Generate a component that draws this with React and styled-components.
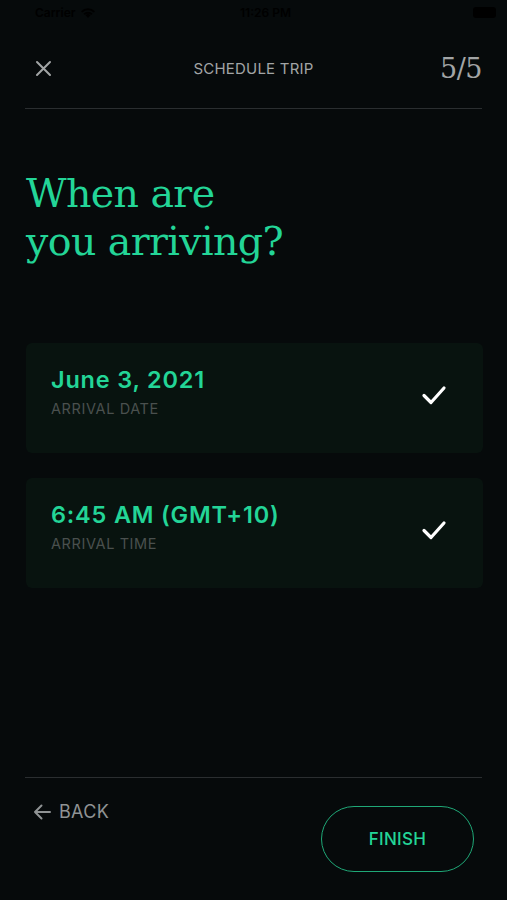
import React from "react";
import styled, { createGlobalStyle } from "styled-components";

const Global = createGlobalStyle`
  html, body { margin: 0; padding: 0; background: #060a0b; }
  * { box-sizing: border-box; }
`;

const Screen = styled.div`
  width: 507px;
  height: 900px;
  background: #060a0b;
  display: flex;
  flex-direction: column;
  font-family: Inter, "Noto Sans", sans-serif;
  overflow: hidden;
`;

const StatusBar = styled.div`
  height: 25px;
  display: grid;
  grid-template-columns: 1fr auto 1fr;
  align-items: center;
  padding: 0 11px 0 35px;
  color: #000;
  font-size: 12px;
  font-weight: 600;
`;

const Carrier = styled.div`
  display: flex;
  align-items: center;
  gap: 4px;
`;

const Battery = styled.div`
  justify-self: end;
  width: 23px;
  height: 11px;
  border-radius: 3px;
  background: #000;
`;

const Header = styled.div`
  margin: 0 25px;
  padding: 23px 0 20px;
  display: grid;
  grid-template-columns: 1fr auto 1fr;
  align-items: center;
  border-bottom: 1px solid #2a2e30;
  height: 84px;
`;

const Close = styled.div`
  display: flex;
  align-items: center;
  padding-left: 10px;
`;

const HeaderTitle = styled.div`
  color: #a2a5a6;
  font-size: 15px;
  letter-spacing: 0.2px;
`;

const Step = styled.div`
  justify-self: end;
  color: #a2a5a6;
  font-family: "DejaVu Serif", serif;
  font-size: 27px;
  letter-spacing: -0.5px;
`;

const Title = styled.h1`
  margin: 60px 26px 0;
  color: #23d597;
  font-family: "DejaVu Serif", serif;
  font-weight: 400;
  font-size: 39.5px;
  line-height: 48px;
  letter-spacing: -0.6px;
`;

const Cards = styled.div`
  margin: 78px 24px 0 26px;
  display: flex;
  flex-direction: column;
  gap: 25px;
`;

const Card = styled.div`
  height: 110px;
  border-radius: 6px;
  background: #08130f;
  display: flex;
  align-items: center;
  justify-content: space-between;
  padding: 0 36px 0 25px;
`;

const CardText = styled.div`
  display: flex;
  flex-direction: column;
  gap: 6px;
  margin-top: -14px;
`;

const Value = styled.div`
  color: #23d597;
  font-size: 23.5px;
  font-weight: 600;
  letter-spacing: 0.8px;
`;

const Label = styled.div`
  color: #4a504e;
  font-size: 14.5px;
  letter-spacing: 0.6px;
`;

const CheckWrap = styled.div`
  display: flex;
  margin-top: -6px;
`;

const Spacer = styled.div`
  flex: 1;
`;

const Footer = styled.div`
  margin: 0 25px;
  border-top: 1px solid #2a2e30;
  height: 123px;
  display: flex;
  justify-content: space-between;
  align-items: flex-start;
`;

const Back = styled.div`
  display: flex;
  align-items: center;
  gap: 7px;
  margin-top: 23px;
  margin-left: 7px;
  color: #8f9394;
  font-size: 18px;
  letter-spacing: 0.3px;
`;

const Finish = styled.div`
  margin-top: 28px;
  margin-right: 8px;
  width: 153px;
  height: 66px;
  border-radius: 33px;
  border: 1.5px solid #1fa877;
  display: flex;
  align-items: center;
  justify-content: center;
  color: #23d597;
  font-size: 17px;
  font-weight: 500;
  letter-spacing: 0.3px;
`;

const Check = () => (
  <CheckWrap>
    <svg width="26" height="22" viewBox="0 0 26 22" fill="none">
      <path d="M3 11.5 L10 18.5 L23 4" stroke="#fff" strokeWidth="3.2" strokeLinecap="round" strokeLinejoin="round" />
    </svg>
  </CheckWrap>
);

export default function App() {
  return (
    <>
      <Global />
      <Screen>
        <StatusBar>
          <Carrier>
            <span>Carrier</span>
            <svg width="16" height="12" viewBox="0 0 16 12">
              <path d="M8 11 L5.5 8.2 A3.6 3.6 0 0 1 10.5 8.2 Z M1 4.2 A10 10 0 0 1 15 4.2 L13.6 5.6 A8 8 0 0 0 2.4 5.6 Z M3.4 6.6 A6.6 6.6 0 0 1 12.6 6.6 L11.2 8 A4.6 4.6 0 0 0 4.8 8 Z" fill="#000" />
            </svg>
          </Carrier>
          <span>11:26 PM</span>
          <Battery />
        </StatusBar>
        <Header>
          <Close>
            <svg width="17" height="17" viewBox="0 0 17 17">
              <path d="M2 2 L15 15 M15 2 L2 15" stroke="#a2a5a6" strokeWidth="2" strokeLinecap="round" />
            </svg>
          </Close>
          <HeaderTitle>SCHEDULE TRIP</HeaderTitle>
          <Step>5/5</Step>
        </Header>
        <Title>
          When are
          <br />
          you arriving?
        </Title>
        <Cards>
          <Card>
            <CardText>
              <Value>June 3, 2021</Value>
              <Label>ARRIVAL DATE</Label>
            </CardText>
            <Check />
          </Card>
          <Card>
            <CardText>
              <Value>6:45 AM (GMT+10)</Value>
              <Label>ARRIVAL TIME</Label>
            </CardText>
            <Check />
          </Card>
        </Cards>
        <Spacer />
        <Footer>
          <Back>
            <svg width="20" height="18" viewBox="0 0 20 18">
              <path d="M18 9 H3 M9.5 2.5 L3 9 L9.5 15.5" stroke="#8f9394" strokeWidth="2" fill="none" strokeLinecap="round" strokeLinejoin="round" />
            </svg>
            <span>BACK</span>
          </Back>
          <Finish>FINISH</Finish>
        </Footer>
      </Screen>
    </>
  );
}
